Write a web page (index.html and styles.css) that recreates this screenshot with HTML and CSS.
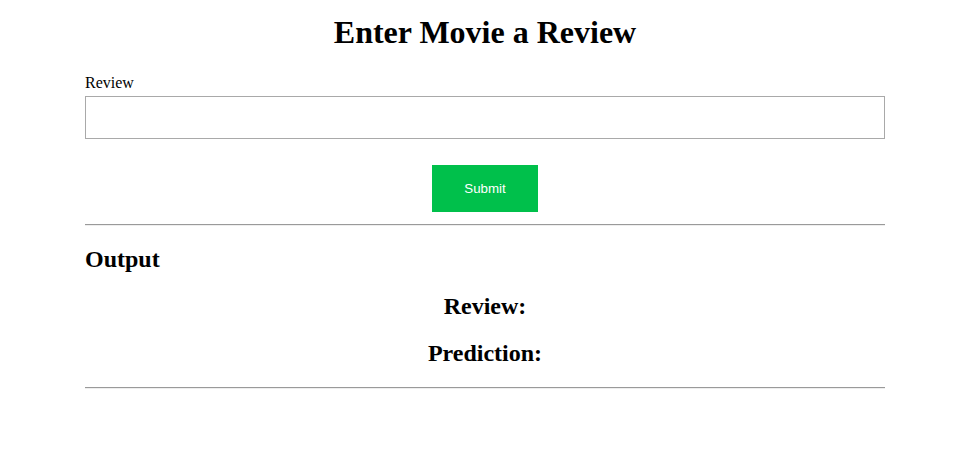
FILE: index.html
```html
<!DOCTYPE html>
<html>
<head>
<meta charset="utf-8">
<link rel="stylesheet" href="styles.css">
</head>
<body>
<div class="container">
  <h1 class="title">Enter Movie a Review</h1>
  <form class="form">
    <label class="label" for="review">Review</label>
    <input class="input" id="review" type="text">
    <div class="actions">
      <button class="submit" type="button">Submit</button>
    </div>
  </form>
  <hr class="rule rule-top">
  <h2 class="heading heading-left">Output</h2>
  <h2 class="heading heading-center">Review:</h2>
  <h2 class="heading heading-center">Prediction:</h2>
  <hr class="rule">
</div>
</body>
</html>
```
FILE: styles.css
```css
html, body {
  margin: 0;
  padding: 0;
  background: #fff;
}
body {
  font-family: "Liberation Serif", "Times New Roman", serif;
  color: #000;
}
.container {
  width: 800px;
  margin-left: 85px;
  padding-top: 14px;
}
.title {
  margin: 0 0 23px;
  font-size: 32px;
  font-weight: bold;
  text-align: center;
  line-height: normal;
}
.form {
  margin: 0;
}
.label {
  display: block;
  font-size: 16px;
  line-height: 18px;
  margin-bottom: 4px;
}
.input {
  display: block;
  box-sizing: border-box;
  width: 800px;
  height: 43px;
  margin: 0;
  border: 1px solid #a9a9a9;
  border-radius: 0;
  padding: 0 8px;
  font-size: 16px;
  outline: none;
}
.actions {
  display: flex;
  justify-content: center;
  margin-top: 26px;
}
.submit {
  width: 106px;
  height: 47px;
  border: 0;
  border-radius: 0;
  background: #00c04b;
  color: #fff;
  font-family: "Liberation Sans", Arial, sans-serif;
  font-size: 13.333px;
  padding: 0;
}
.rule {
  height: 0;
  margin: 8px 0;
  border: 0;
  border-top: 1px solid #9a9a9a;
  border-bottom: 1px solid #eeeeee;
}
.rule-top {
  margin-top: 12px;
}
.heading {
  font-size: 24px;
  font-weight: bold;
  margin: 19.92px 0;
  line-height: normal;
}
.heading-left {
  text-align: left;
}
.heading-center {
  text-align: center;
}
```
